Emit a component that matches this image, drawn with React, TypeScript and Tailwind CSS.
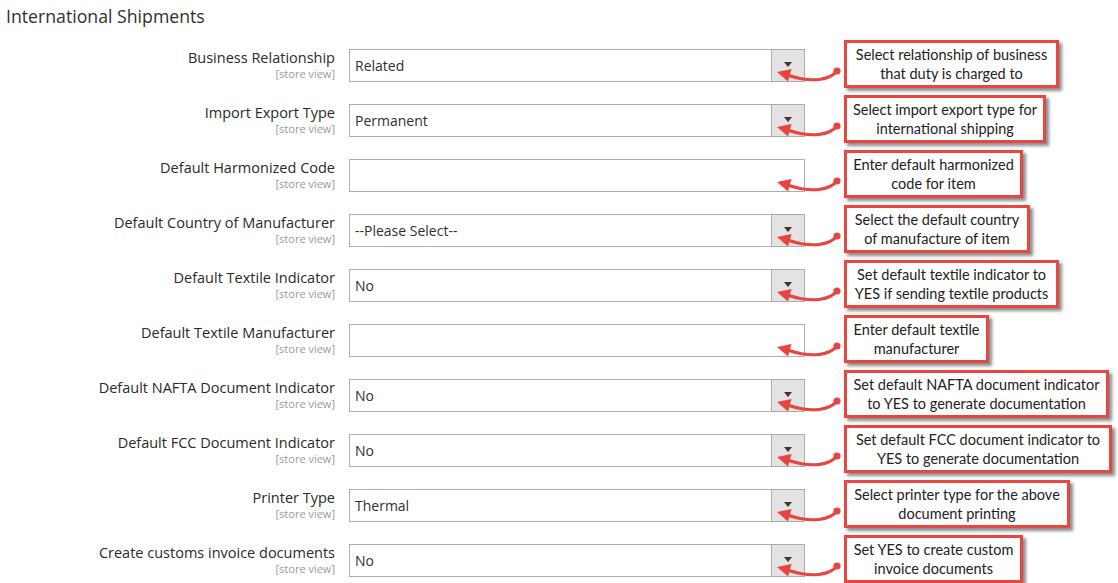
import React from 'react';

type Row = {
  label: string;
  value?: string;
  select: boolean;
  note: [string, string];
  boxW: string;
};

const rows: Row[] = [
  { label: 'Business Relationship', value: 'Related', select: true, note: ['Select relationship of business', 'that duty is charged to'], boxW: 'w-[215px]' },
  { label: 'Import Export Type', value: 'Permanent', select: true, note: ['Select import export type for', 'international shipping'], boxW: 'w-[202px]' },
  { label: 'Default Harmonized Code', select: false, note: ['Enter default harmonized', 'code for item'], boxW: 'w-[179px]' },
  { label: 'Default Country of Manufacturer', value: '--Please Select--', select: true, note: ['Select the default country', 'of manufacture of item'], boxW: 'w-[186px]' },
  { label: 'Default Textile Indicator', value: 'No', select: true, note: ['Set default textile indicator to', 'YES if sending textile products'], boxW: 'w-[215px]' },
  { label: 'Default Textile Manufacturer', select: false, note: ['Enter default textile', 'manufacturer'], boxW: 'w-[145px]' },
  { label: 'Default NAFTA Document Indicator', value: 'No', select: true, note: ['Set default NAFTA document indicator', 'to YES to generate documentation'], boxW: 'w-[265px]' },
  { label: 'Default FCC Document Indicator', value: 'No', select: true, note: ['Set default FCC document indicator to', 'YES to generate documentation'], boxW: 'w-[268px]' },
  { label: 'Printer Type', value: 'Thermal', select: true, note: ['Select printer type for the above', 'document printing'], boxW: 'w-[226px]' },
  { label: 'Create customs invoice documents', value: 'No', select: true, note: ['Set YES to create custom', 'invoice documents'], boxW: 'w-[179px]' },
];

function CurvedArrow() {
  return (
    <svg className="absolute left-[770px] top-0 pointer-events-none" width="76" height="42" viewBox="0 0 76 42">
      <path d="M67 22 C 60 31, 42 34, 19 26.5" fill="none" stroke="#e8453f" strokeWidth="3" strokeLinecap="round" />
      <polygon points="7,23 21.5,20 18,32.5" fill="#e8453f" />
      <circle cx="67" cy="22" r="3.6" fill="#e8453f" />
    </svg>
  );
}

function FieldRow({ row }: { row: Row }) {
  return (
    <div className="relative flex items-start h-[55px]">
      <div className="w-[335px] shrink-0 text-right -mt-[1px]">
        <div className="text-[14.5px] leading-[20px] text-[#2a2a2a]">{row.label}</div>
        <div className="text-[11px] leading-[12px] text-[#9a9a9a]">[store view]</div>
      </div>
      <div className="ml-[14px] w-[456px] h-[33px] shrink-0 flex border border-[#adadad] bg-white">
        <div className="flex-1 px-[5px] flex items-center text-[14px] text-[#303030]">{row.value}</div>
        {row.select && (
          <div className="w-[33px] border-l border-[#adadad] bg-[#e3e3e3] flex items-center justify-center">
            <div className="w-0 h-0 border-l-[4px] border-r-[4px] border-t-[5px] border-l-transparent border-r-transparent border-t-[#41362f] -mt-[2px]" />
          </div>
        )}
      </div>
      <CurvedArrow />
      <div
        className={`${row.boxW} absolute left-[844px] -top-[9px] h-[48px] border-[3px] border-[#e8463f] bg-white shadow-[3px_3px_3px_rgba(0,0,0,0.45)] flex flex-col items-center justify-center text-[14.5px] leading-[19px] text-[#222] whitespace-nowrap`}
        style={{ fontFamily: 'Lato, "Liberation Sans", sans-serif' }}
      >
        <span>{row.note[0]}</span>
        <span>{row.note[1]}</span>
      </div>
    </div>
  );
}

export default function App() {
  return (
    <div className="w-[1118px] h-[583px] bg-white overflow-hidden" style={{ fontFamily: '"Open Sans", "Liberation Sans", sans-serif' }}>
      <h2 className="pl-[6px] pt-[5px] h-[49px] text-[17.7px] leading-[22px] text-[#303030]">International Shipments</h2>
      {rows.map((r) => (
        <FieldRow key={r.label} row={r} />
      ))}
    </div>
  );
}
